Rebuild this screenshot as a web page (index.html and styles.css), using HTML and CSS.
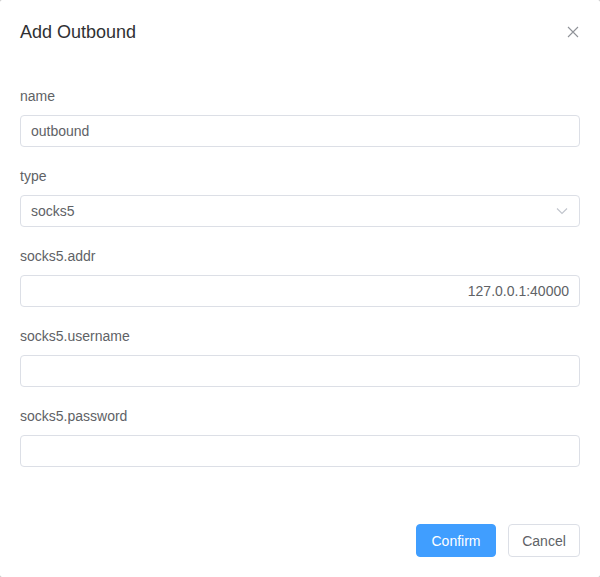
FILE: index.html
```html
<!DOCTYPE html>
<html>
<head>
<meta charset="utf-8">
<link rel="stylesheet" href="styles.css">
</head>
<body>
<div class="dialog">
  <div class="header">
    <span class="title">Add Outbound</span>
    <button class="close" aria-label="Close">
      <svg width="12" height="12" viewBox="0 0 12 12"><path d="M1 1L11 11M11 1L1 11" stroke="#909399" stroke-width="1.1" fill="none"/></svg>
    </button>
  </div>
  <div class="body">
    <div class="item">
      <label class="label">name</label>
      <div class="input"><span class="value">outbound</span></div>
    </div>
    <div class="item">
      <label class="label">type</label>
      <div class="input select"><span class="value">socks5</span>
        <svg class="arrow" width="12" height="8" viewBox="0 0 12 8"><path d="M1 1.5L6 6.5L11 1.5" stroke="#c0c4cc" stroke-width="1.1" fill="none"/></svg>
      </div>
    </div>
    <div class="item">
      <label class="label">socks5.addr</label>
      <div class="input right"><span class="value">127.0.0.1:40000</span></div>
    </div>
    <div class="item">
      <label class="label">socks5.username</label>
      <div class="input"></div>
    </div>
    <div class="item">
      <label class="label">socks5.password</label>
      <div class="input"></div>
    </div>
  </div>
  <div class="footer">
    <button class="btn primary">Confirm</button>
    <button class="btn">Cancel</button>
  </div>
</div>
</body>
</html>
```
FILE: styles.css
```css
html, body {
  margin: 0;
  padding: 0;
  background: #bdbdbd;
}
body {
  font-family: "Liberation Sans", Arial, sans-serif;
  width: 600px;
  height: 577px;
  overflow: hidden;
}
.dialog {
  background: #fff;
  width: 600px;
  height: 577px;
  border-radius: 2px;
  box-sizing: border-box;
}
.header {
  padding: 20px 20px 10px;
  display: flex;
  align-items: center;
  justify-content: space-between;
  height: 24px;
}
.title {
  font-size: 18px;
  line-height: 24px;
  color: #303133;
}
.close {
  border: 0;
  background: none;
  padding: 0;
  margin-right: 1px;
  display: flex;
  width: 12px;
  height: 12px;
}
.body {
  padding: 31px 20px 30px;
}
.item {
  margin-bottom: 18px;
  display: flex;
  flex-direction: column;
}
.item:last-child {
  margin-bottom: 17px;
}
.label {
  font-size: 14px;
  line-height: 22px;
  color: #606266;
  margin-bottom: 8px;
}
.input {
  height: 32px;
  box-sizing: border-box;
  border: 1px solid #dcdfe6;
  border-radius: 4px;
  padding: 0 10px;
  display: flex;
  align-items: center;
  font-size: 14px;
  color: #606266;
}
.input.right {
  justify-content: flex-end;
}
.input.select {
  justify-content: space-between;
}
.arrow {
  margin-right: 1px;
}
.footer {
  padding: 10px 20px 20px;
  display: flex;
  justify-content: flex-end;
  gap: 12px;
}
.btn {
  height: 33px;
  padding: 0;
  font-family: "Liberation Sans", Arial, sans-serif;
  font-size: 14px;
  border-radius: 4px;
  border: 1px solid #dcdfe6;
  background: #fff;
  color: #606266;
  width: 72px;
}
.btn.primary {
  background: #409eff;
  border-color: #409eff;
  color: #fff;
  width: 80px;
}
```
